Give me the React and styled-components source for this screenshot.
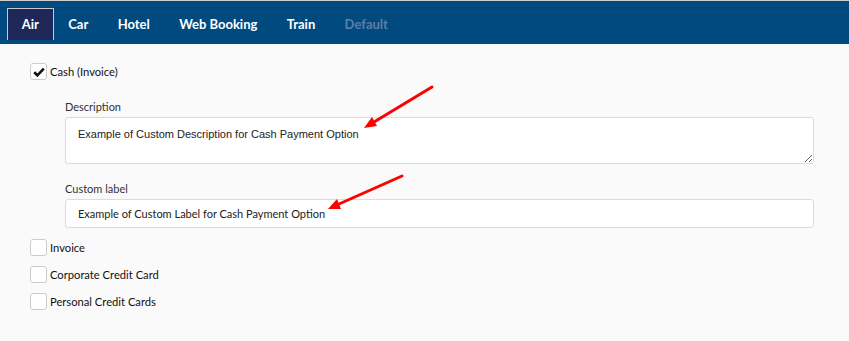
import styled, { createGlobalStyle } from 'styled-components'

const GlobalStyle = createGlobalStyle`
  html, body {
    margin: 0;
    padding: 0;
    background: #fafafa;
    font-family: Lato, "Liberation Sans", sans-serif;
  }
`

const Page = styled.div`
  position: relative;
  width: 849px;
  height: 341px;
  background: #fafafa;
  overflow: hidden;
`

const NavBar = styled.nav`
  display: flex;
  align-items: flex-start;
  height: 44px;
  padding: 7px 0 0 7px;
  box-sizing: border-box;
  border-top: 1px solid #cfcfcf;
  background-color: #004a80;
`

const Tab = styled.div`
  height: 32px;
  box-sizing: border-box;
  display: flex;
  align-items: center;
  padding: 0 13.7px 1px;
  border: 1px solid ${(props) => (props.$active ? '#c9c9c9' : 'transparent')};
  border-bottom: none;
  background-color: ${(props) => (props.$active ? '#1e2757' : 'transparent')};
  color: ${(props) => (props.$disabled ? '#5d7fa2' : '#ffffff')};
  font-weight: 700;
  font-size: 13px;
`

const Content = styled.div`
  padding: 19px 0 0 30px;
  display: flex;
  flex-direction: column;
`

const OptionRow = styled.label`
  display: flex;
  align-items: center;
  gap: 3px;
  height: 17px;
  margin-bottom: ${(props) => props.$spacing || '10px'};
  font-size: 11.2px;
  color: #111;
`

const Box = styled.span`
  width: 17px;
  height: 17px;
  box-sizing: border-box;
  border: 1px solid #cccccc;
  border-radius: 3px;
  background: #fff;
  display: flex;
  align-items: center;
  justify-content: center;
`

const Details = styled.div`
  margin: 20px 0 11px 35px;
  width: 749px;
  display: flex;
  flex-direction: column;
`

const FieldLabel = styled.div`
  font-size: 11px;
  line-height: 14px;
  color: #333;
  margin-bottom: 3px;
`

const TextArea = styled.textarea`
  display: block;
  width: 749px;
  height: 47px;
  box-sizing: border-box;
  border: 1px solid #dcdcdc;
  border-radius: 3px;
  background: #fff;
  padding: 10px 12px;
  font-family: "Liberation Sans", Arial, sans-serif;
  font-size: 11px;
  color: #222;
  margin: 0 0 18px;
  outline: none;
`

const TextInput = styled.input`
  display: block;
  width: 749px;
  height: 29px;
  box-sizing: border-box;
  border: 1px solid #dcdcdc;
  border-radius: 3px;
  background: #fff;
  padding: 0 12px;
  font-family: Lato, sans-serif;
  font-size: 11px;
  color: #222;
  outline: none;
`

const Annotations = styled.svg`
  position: absolute;
  left: 0;
  top: 0;
  pointer-events: none;
`

function CheckBox({ checked }) {
  return (
    <Box>
      {checked && (
        <svg width="12" height="10" viewBox="0 0 12 10">
          <path d="M1.2 5.2 L4.4 8.3 L10.8 1.6" fill="none" stroke="#111" strokeWidth="2.6" />
        </svg>
      )}
    </Box>
  )
}

function Option({ label, checked, spacing }) {
  return (
    <OptionRow $spacing={spacing}>
      <CheckBox checked={checked} />
      {label}
    </OptionRow>
  )
}

const tabs = ['Air', 'Car', 'Hotel', 'Web Booking', 'Train', 'Default']

export default function App() {
  return (
    <Page>
      <GlobalStyle />
      <NavBar>
        {tabs.map((t, i) => (
          <Tab key={t} $active={i === 0} $disabled={t === 'Default'}>
            {t}
          </Tab>
        ))}
      </NavBar>
      <Content>
        <Option label="Cash (Invoice)" checked spacing="0" />
        <Details>
          <FieldLabel>Description</FieldLabel>
          <TextArea readOnly defaultValue="Example of Custom Description for Cash Payment Option" />
          <FieldLabel>Custom label</FieldLabel>
          <TextInput readOnly defaultValue="Example of Custom Label for Cash Payment Option" />
        </Details>
        <Option label="Invoice" />
        <Option label="Corporate Credit Card" />
        <Option label="Personal Credit Cards" />
      </Content>
      <Annotations width="849" height="341">
        <line x1="432" y1="87" x2="374" y2="122" stroke="#f00" strokeWidth="3" strokeLinecap="round" />
        <polygon points="364,128 377,126 372,117" fill="#f00" />
        <line x1="402" y1="176" x2="339" y2="204" stroke="#f00" strokeWidth="3" strokeLinecap="round" />
        <polygon points="328,209 341,209 337,199" fill="#f00" />
      </Annotations>
    </Page>
  )
}
